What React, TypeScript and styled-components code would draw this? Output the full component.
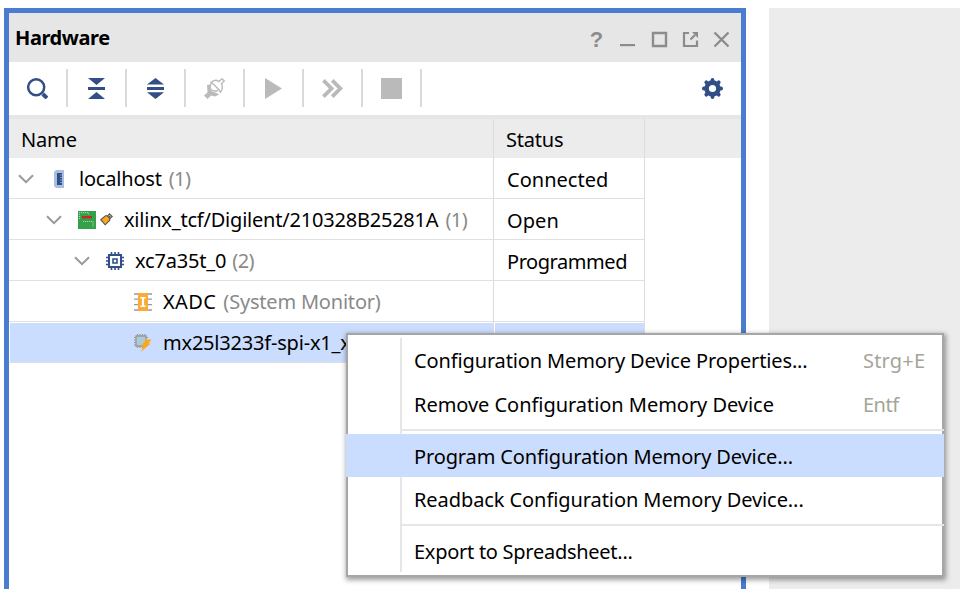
import React from "react";
import styled, { createGlobalStyle } from "styled-components";

const GlobalStyle = createGlobalStyle`
  * { box-sizing: border-box; }
  body { margin: 0; background: #fff; overflow: hidden; }
  svg { display: block; flex: none; }
`;

const NAVY = "#314f86";
const GREY = "#bababa";
const CHROME = "#8c8c8c";

const Page = styled.div`
  position: relative;
  width: 960px;
  height: 589px;
  padding: 8px 0 0 4px;
  display: flex;
  gap: 23px;
  overflow: hidden;
  font: 20px/28px "Noto Sans", "Open Sans", sans-serif;
  color: #000;
`;

const Panel = styled.section`
  width: 742px;
  border: 5px solid #4a7dcf;
  border-bottom: 0;
  background: #fff;
`;

const Workspace = styled.div`
  flex: 1;
  background: #ececec;
`;

const TitleBar = styled.header`
  height: 49px;
  padding: 0 11px 0 6px;
  display: flex;
  align-items: center;
  justify-content: space-between;
  background: #e6e6e6;
`;

const Title = styled.h1`
  margin: 0;
  font-size: 20px;
  line-height: 28px;
  font-weight: 700;
  letter-spacing: -0.42px;
`;

const WindowButtons = styled.div`
  display: flex;
  gap: 14px;
  padding-top: 4px;
`;

const Help = styled.span`
  width: 17px;
  height: 17px;
  margin-right: 1px;
  display: flex;
  align-items: center;
  justify-content: center;
  font: 700 22px/17px "Liberation Sans", sans-serif;
  color: ${CHROME};
`;

const Toolbar = styled.nav`
  height: 57px;
  display: flex;
  border-bottom: 4px solid #e6e6e6;
`;

const Tool = styled.div`
  width: 59px;
  height: 38px;
  margin-top: 7px;
  display: flex;
  align-items: center;
  justify-content: center;
  border-right: 2px solid #dadada;
`;

const Settings = styled(Tool)`
  width: 57px;
  margin-left: auto;
  border: 0;
`;

const Row = styled.div<{ $header?: boolean }>`
  height: ${(p) => (p.$header ? 39 : 41)}px;
  display: flex;
  background: ${(p) => (p.$header ? "#ececec" : "transparent")};
`;

const Cell = styled.div<{ $status?: boolean; $line?: boolean; $on?: boolean }>`
  width: ${(p) => (p.$status ? 151 : 485)}px;
  padding: 1px 0 0 1px;
  display: flex;
  border-right: 1px solid #dcdcdc;
  border-bottom: ${(p) => (p.$line ? "1px solid #e0e0e0" : "0")};
  background: ${(p) => (p.$on ? "#cbddfe" : "transparent")} content-box;
`;

const Fill = styled.div<{ $depth?: number; $pad?: number }>`
  flex: 1;
  display: flex;
  align-items: center;
  padding-left: ${(p) => (p.$pad ?? 8) + (p.$depth ?? 0) * 28}px;
`;

const Text = styled.span<{ $ls?: number; $dim?: boolean; $drop?: number; $gap?: number }>`
  white-space: pre;
  letter-spacing: ${(p) => p.$ls ?? 0}px;
  color: ${(p) => (p.$dim ? "#8a8a8a" : "inherit")};
  margin-top: ${(p) => (p.$drop ?? 0) * 2}px;
  margin-left: ${(p) => p.$gap ?? 0}px;
`;

const Toggle = styled.div`
  width: 16px;
  margin-right: 16px;
`;

const Icons = styled.div<{ $gap: number }>`
  display: flex;
  align-items: center;
  gap: 4px;
  margin-right: ${(p) => p.$gap}px;
`;

const Menu = styled.div`
  position: absolute;
  left: 346px;
  top: 333px;
  width: 598px;
  height: 244px;
  padding-top: 3px;
  border: 2px solid #a6a6a6;
  background: #fff;
  box-shadow: 1px 2px 5px 1px rgba(0, 0, 0, 0.38);
`;

const MenuItem = styled.div<{ $active?: boolean; $h: number }>`
  height: ${(p) => p.$h}px;
  margin: 0 -2px;
  padding-left: 2px;
  display: flex;
  align-items: center;
  background: ${(p) => (p.$active ? "#cbddfe" : "transparent")};
`;

const Gutter = styled.div<{ $bare?: boolean }>`
  width: 54px;
  align-self: stretch;
  flex: none;
  border-right: 2px solid ${(p) => (p.$bare ? "transparent" : "#e6e6e6")};
`;

const Caption = styled(Text)`
  width: 461px;
  flex: none;
  padding-left: 12px;
`;

const Shortcut = styled(Text)`
  color: #a5a597;
`;

const Rule = styled.div<{ $lift?: boolean }>`
  flex: 1;
  height: 2px;
  margin-bottom: ${(p) => (p.$lift ? 2 : 0)}px;
  background: #e6e6e6;
`;

const Chevron = () => (
  <svg width="16" height="10" viewBox="0 0 16 10" fill="none" stroke="#999" strokeWidth="2">
    <path d="M1 1.2 8 8.2 15 1.2" />
  </svg>
);

const SearchIcon = () => (
  <svg width="21" height="21" viewBox="0 0 21 21" fill="none" stroke={NAVY}>
    <circle cx="9.2" cy="9.3" r="8" strokeWidth="2.5" />
    <path d="M15.8 16 20 20" strokeWidth="4" />
  </svg>
);

const CollapseIcon = () => (
  <svg width="17" height="21" viewBox="0 0 17 21" fill={NAVY}>
    <path d="M0 0H17L8.5 7ZM0 9H17V12H0ZM8.5 14 17 21H0Z" />
  </svg>
);

const ExpandIcon = () => (
  <svg width="17" height="21" viewBox="0 0 17 21" fill={NAVY}>
    <path d="M8.5 0 17 6.5H0ZM0 9H17V12H0ZM0 14.2H17L8.5 21Z" />
  </svg>
);

const ConnectIcon = () => (
  <svg width="21" height="21" viewBox="0 0 21 21">
    <path d="M3 7 6 6.5 6 11Q8 15 11 14.2L15 16.5 11 18.5 7 17.5 3.5 21 0 17.5 3.5 14.5Z" fill={GREY} />
    <path
      d="M7 4.5Q11 .5 15 3.5L18 .8 20.2 3 17.5 5.8Q19.5 10 16.5 14.2L15 11.8 8 4.8ZM7.5 5Q5 9 7 11.5 10 14 14 12.5"
      fill="none"
      stroke={GREY}
      strokeWidth="1.4"
    />
  </svg>
);

const PlayIcon = () => (
  <svg width="17" height="21" viewBox="0 0 17 21">
    <path d="M0 0 17 10.5 0 21Z" fill={GREY} />
  </svg>
);

const FastIcon = () => (
  <svg width="21" height="19" viewBox="0 0 21 19" fill="none" stroke={GREY} strokeWidth="3.8">
    <path d="M1.4 1.4 9.5 9.5 1.4 17.6M10.2 1.4 18.3 9.5 10.2 17.6" />
  </svg>
);

const StopIcon = () => (
  <svg width="21" height="21" viewBox="0 0 21 21">
    <path d="M0 0H21V21H0Z" fill={GREY} />
  </svg>
);

const GearIcon = () => (
  <svg width="21" height="21" viewBox="-10.5 -10.5 21 21">
    <g stroke={NAVY} strokeWidth="3.8" strokeLinecap="round">
      <path d="M0-8.6V-6M0 8.6V6M-8.6 0H-6M8.6 0H6M-6.2-6.2-4-4M6.2 6.2 4 4M-6.2 6.2-4 4M6.2-6.2 4-4" />
    </g>
    <circle r="5.9" fill="none" stroke={NAVY} strokeWidth="4.6" />
  </svg>
);

const MinimizeIcon = () => (
  <svg width="17" height="17" viewBox="0 0 17 17">
    <path d="M0 13H15V15.2H0Z" fill={CHROME} />
  </svg>
);

const MaximizeIcon = () => (
  <svg width="17" height="17" viewBox="0 0 17 17">
    <path d="M2 2H15V15H2Z" fill="none" stroke={CHROME} strokeWidth="2.4" />
  </svg>
);

const FloatIcon = () => (
  <svg width="17" height="17" viewBox="0 0 17 17" fill="none" stroke={CHROME} strokeWidth="2.2">
    <path d="M7 2H2V15H15V9.5M8.5 8.5 13 4" />
    <path d="M10 1H16V7Z" fill={CHROME} stroke="none" />
  </svg>
);

const CloseIcon = () => (
  <svg width="17" height="17" viewBox="0 0 17 17">
    <path d="M1.5 1.5 15.5 15.5M15.5 1.5 1.5 15.5" stroke={CHROME} strokeWidth="2.4" />
  </svg>
);

const ServerIcon = () => (
  <svg width="18" height="18" viewBox="0 0 18 18">
    <path d="M6 0H14V18H6L4 16V2Z" fill="#a8bfe2" />
    <path d="M7 3H12V15H7Z" fill={NAVY} />
    <path d="M10 5H12M10 7.5H12M10 10H12M10 12.5H12" stroke="#7f99c6" />
  </svg>
);

const BoardIcon = () => (
  <svg width="18" height="18" viewBox="0 0 18 18">
    <path d="M0 0H18V18H0Z" fill="#34a047" />
    <path d="M4 5H14V7.4H4Z" fill="#c4262e" />
    <path d="M1.5 8V1.6H10.5V3.2M5 10.5H15V16.5" fill="none" stroke="#a8d6ae" strokeWidth="1.2" strokeDasharray="1.1 .9" />
  </svg>
);

const UsbIcon = () => (
  <svg width="13" height="13" viewBox="0 0 13 13" stroke="#555" strokeWidth="1.1">
    <path d="M7 3.5 9.5.8 12.3 3.5 9.5 6Z" fill="#ddd" />
    <path d="M.8 6.7 5.5 2.8H7.3L9.8 5.3V7.2L5.2 11.8Z" fill="#f9a51f" />
    <path d="M9 2.8 10.3 4" />
  </svg>
);

const ChipIcon = () => (
  <svg width="18" height="18" viewBox="0 0 18 18" fill="none" stroke={NAVY} strokeWidth="2">
    <path d="M3 3H15V15H3Z" />
    <path d="M7 7H11V11H7Z" strokeWidth="1.6" />
    <path d="M5.5 0V3M9 0V3M12.5 0V3M5.5 15V18M9 15V18M12.5 15V18M0 5.5H3M0 9H3M0 12.5H3M15 5.5H18M15 9H18M15 12.5H18" strokeWidth="1.6" />
  </svg>
);

const MonitorIcon = () => (
  <svg width="18" height="18" viewBox="0 0 18 18">
    <path d="M0 1H18M0 6.2H18M0 11.6H18M0 17H18" stroke="#9a9a9a" strokeWidth="1.3" />
    <path d="M4 0H14V18H4Z" fill="#fbaa35" />
    <path d="M6.3 4H11.7V5.5H10.1V12.5H11.7V14H6.3V12.5H7.9V5.5H6.3Z" fill="#fff" />
  </svg>
);

const FlashIcon = () => (
  <svg width="18" height="18" viewBox="0 0 18 18">
    <path d="M2 2H12V12H2Z" fill="#afc9d6" stroke="#999" strokeWidth="1.3" />
    <path d="M3.5 0V2M6 0V2M8.5 0V2M11 0V2M3.5 12V14M6 12V14M8.5 12V14M0 3.5H2M0 6H2M0 8.5H2M0 11H2M12 3.5H14" stroke="#999" strokeWidth="1.2" />
    <path d="M12 5.5H17.5L14.5 9.5H16.8L6.5 18 9.5 12.5H7Z" fill="#fba919" />
  </svg>
);

type Node = {
  name: string;
  ls: number;
  note?: string;
  noteLs?: number;
  noteGap?: number;
  icons: React.ReactNode;
  leaf?: boolean;
  status?: string;
  statusLs?: number;
  active?: boolean;
};

const nodes: Node[] = [
  { name: "localhost", ls: -0.2, note: "(1)", noteLs: -0.6, noteGap: 7, icons: <ServerIcon />, status: "Connected", statusLs: 0.02 },
  {
    name: "xilinx_tcf/Digilent/210328B25281A",
    ls: -0.21,
    note: "(1)",
    noteLs: -0.6,
    noteGap: 7,
    icons: (
      <>
        <BoardIcon />
        <UsbIcon />
      </>
    ),
    status: "Open",
    statusLs: 0.1,
  },
  { name: "xc7a35t_0", ls: -0.18, note: "(2)", noteLs: -0.6, noteGap: 6, icons: <ChipIcon />, status: "Programmed", statusLs: -0.44 },
  { name: "XADC", ls: 0.4, note: "(System Monitor)", noteLs: -0.2, noteGap: 7, icons: <MonitorIcon />, leaf: true },
  { name: "mx25l3233f-spi-x1_x", ls: -0.2, icons: <FlashIcon />, leaf: true, active: true },
];

const tools = [SearchIcon, CollapseIcon, ExpandIcon, ConnectIcon, PlayIcon, FastIcon, StopIcon];

export default function App() {
  return (
    <Page>
      <GlobalStyle />
      <Panel>
        <TitleBar>
          <Title>Hardware</Title>
          <WindowButtons>
            <Help>?</Help>
            <MinimizeIcon />
            <MaximizeIcon />
            <FloatIcon />
            <CloseIcon />
          </WindowButtons>
        </TitleBar>
        <Toolbar>
          {tools.map((Icon, i) => (
            <Tool key={i}>
              <Icon />
            </Tool>
          ))}
          <Settings>
            <GearIcon />
          </Settings>
        </Toolbar>
        <Row $header>
          <Cell>
            <Fill $pad={11}>
              <Text $ls={-0.15} $drop={1}>Name</Text>
            </Fill>
          </Cell>
          <Cell $status>
            <Fill $pad={11}>
              <Text $ls={-0.2} $drop={1}>Status</Text>
            </Fill>
          </Cell>
        </Row>
        {nodes.map((n, i) => (
          <Row key={n.name}>
            <Cell $line $on={n.active}>
              <Fill $depth={Math.min(i, 3)}>
                <Toggle>{!n.leaf && <Chevron />}</Toggle>
                <Icons $gap={11}>{n.icons}</Icons>
                <Text $ls={n.ls}>{n.name}</Text>
                {n.note && (
                  <Text $dim $ls={n.noteLs} $gap={n.noteGap}>
                    {n.note}
                  </Text>
                )}
              </Fill>
            </Cell>
            <Cell $status $line $on={n.active}>
              <Fill $pad={12}>
                <Text $ls={n.statusLs} $drop={1}>{n.status}</Text>
              </Fill>
            </Cell>
          </Row>
        ))}
      </Panel>
      <Workspace />
      <Menu>
        <MenuItem $h={45}>
          <Gutter />
          <Caption $ls={-0.13}>Configuration Memory Device Properties...</Caption>
          <Shortcut $ls={0.2}>Strg+E</Shortcut>
        </MenuItem>
        <MenuItem $h={44}>
          <Gutter />
          <Caption $ls={-0.04}>Remove Configuration Memory Device</Caption>
          <Shortcut $ls={-0.5}>Entf</Shortcut>
        </MenuItem>
        <MenuItem $h={7}>
          <Gutter />
          <Rule $lift />
        </MenuItem>
        <MenuItem $h={43} $active>
          <Gutter $bare />
          <Caption $ls={-0.13} $drop={1}>Program Configuration Memory Device...</Caption>
        </MenuItem>
        <MenuItem $h={44}>
          <Gutter />
          <Caption $ls={-0.08} $drop={1}>Readback Configuration Memory Device...</Caption>
        </MenuItem>
        <MenuItem $h={7}>
          <Gutter />
          <Rule />
        </MenuItem>
        <MenuItem $h={44}>
          <Gutter />
          <Caption $ls={-0.27} $drop={2}>Export to Spreadsheet...</Caption>
        </MenuItem>
      </Menu>
    </Page>
  );
}
